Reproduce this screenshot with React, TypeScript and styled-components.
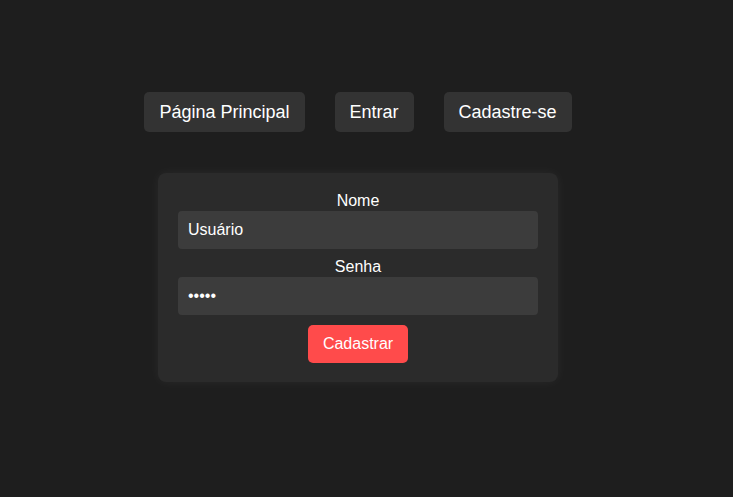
import React from 'react'
import styled, { createGlobalStyle } from 'styled-components'

const GlobalStyle = createGlobalStyle`
    body {
        margin: 0;
        background: #1e1e1e;
        font-family: 'Liberation Sans', Arial, sans-serif;
        color: #fff;
    }
`

const Page = styled.div`
    display: flex;
    flex-direction: column;
    align-items: center;
    padding-top: 92px;
    padding-right: 17px; /* reference was shot with a scrollbar */
    min-height: 100vh;
    box-sizing: border-box;
`

const Nav = styled.nav`
    display: flex;
    gap: 30px;
    margin-bottom: 41px;
`

const NavButton = styled.button`
    height: 40px;
    padding: 0 15px;
    background: #333333;
    color: #fff;
    border: none;
    border-radius: 5px;
    font-family: inherit;
    font-size: 18px;
    cursor: pointer;
`

const Card = styled.form`
    width: 400px;
    box-sizing: border-box;
    padding: 19px 20px 19px;
    background: #2b2b2b;
    border-radius: 8px;
    box-shadow: 0 0 12px rgba(255, 255, 255, 0.05);
    display: flex;
    flex-direction: column;
    align-items: center;
`

const Label = styled.label`
    font-size: 16px;
    line-height: 18px;
    margin-bottom: 1px;
`

const Input = styled.input<{ $last?: boolean }>`
    width: 100%;
    height: 38px;
    box-sizing: border-box;
    padding: 0 10px;
    background: #3c3c3c;
    color: #fff;
    border: none;
    border-radius: 4px;
    font-family: inherit;
    font-size: 16px;
    margin-bottom: ${({ $last }) => ($last ? '10px' : '9px')};
    outline: none;
`

const SubmitButton = styled.button`
    width: 100px;
    height: 38px;
    background: #ff4b4b;
    color: #fff;
    border: none;
    border-radius: 5px;
    font-family: inherit;
    font-size: 16px;
    cursor: pointer;
`

const App: React.FC = () => {
  return (
    <>
      <GlobalStyle />
      <Page>
        <Nav>
          <NavButton>Página Principal</NavButton>
          <NavButton>Entrar</NavButton>
          <NavButton>Cadastre-se</NavButton>
        </Nav>
        <Card onSubmit={(e) => e.preventDefault()}>
          <Label htmlFor="nome">Nome</Label>
          <Input id="nome" type="text" defaultValue="Usuário" />
          <Label htmlFor="senha">Senha</Label>
          <Input id="senha" type="password" defaultValue="12345" $last />
          <SubmitButton type="submit">Cadastrar</SubmitButton>
        </Card>
      </Page>
    </>
  )
}

export default App
